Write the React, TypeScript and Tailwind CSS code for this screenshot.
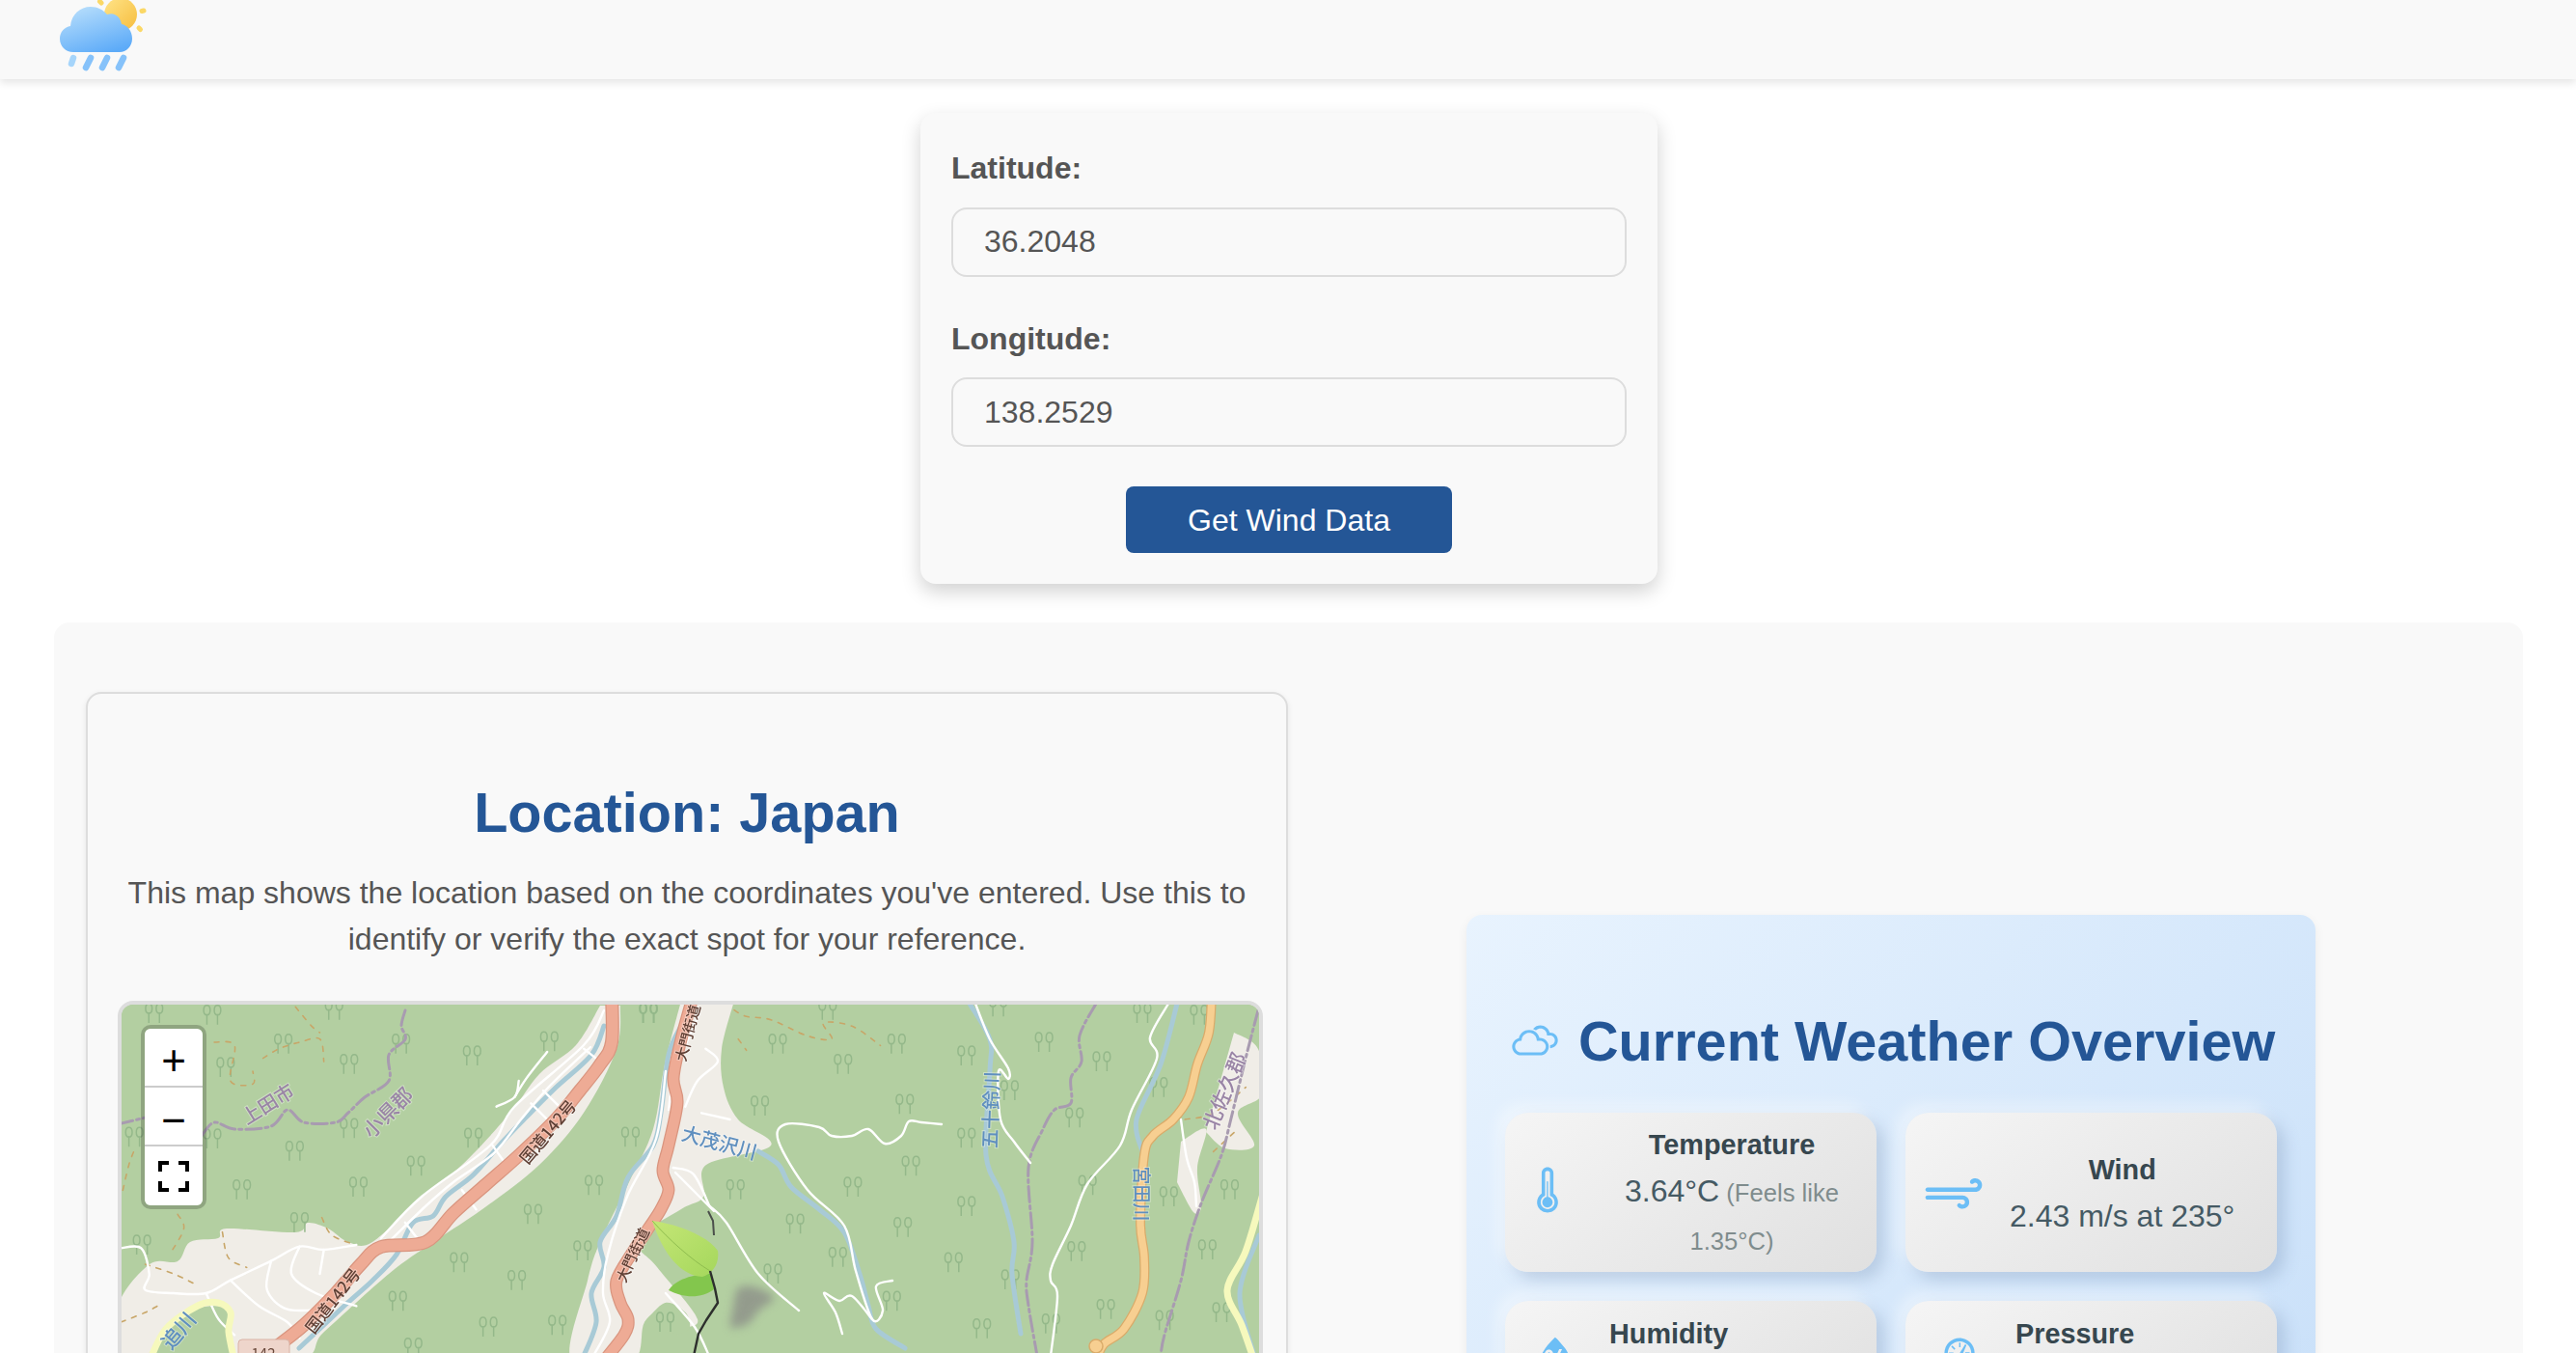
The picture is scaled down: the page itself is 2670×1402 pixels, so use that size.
import React from 'react';
import { WiBarometer, WiCloudy, WiHumidity, WiStrongWind, WiThermometer } from 'react-icons/wi';

type Pts = number[][];

// the crops of the map were read in zoomed coordinates, these bring them back to page pixels
const z3 = (pts: Pts): Pts => pts.map(([x, y]) => [100 + x / 2.376, 1020 + y / 3]);
const z4 = (pts: Pts): Pts => pts.map(([x, y]) => [660 + x / 2.376, 1020 + y / 3]);

const smooth = (p: Pts) => {
    let d = `M${p[0][0]} ${p[0][1]}`;
    for (let i = 0; i < p.length - 1; i++) {
        const a = p[Math.max(i - 1, 0)];
        const b = p[i];
        const c = p[i + 1];
        const e = p[Math.min(i + 2, p.length - 1)];
        d += ` C${b[0] + (c[0] - a[0]) / 6} ${b[1] + (c[1] - a[1]) / 6} ${c[0] - (e[0] - b[0]) / 6} ${c[1] - (e[1] - b[1]) / 6} ${c[0]} ${c[1]}`;
    }
    return d;
};
const shape = (p: Pts) => smooth(p) + ' Z';

const trees: Pts = [
    ...z3([[142, 90], [285, 95], [585, 80], [460, 185], [318, 258], [622, 248], [925, 222], [1115, 178], [750, 185], [488, 518], [787, 565], [358, 638], [645, 630], [112, 810], [500, 740], [928, 478], [1225, 625], [1075, 715], [893, 865], [1197, 828], [1035, 920], [742, 985], [965, 1065], [1135, 1060], [1315, 475], [1360, 90], [622, 448], [93, 475], [285, 480], [780, 1130]]),
    ...z4([[28, 90], [470, 80], [890, 70], [1245, 90], [1385, 95], [347, 185], [640, 185], [1003, 180], [812, 222], [508, 248], [1145, 240], [303, 378], [660, 373], [1078, 415], [812, 478], [675, 565], [243, 638], [532, 630], [812, 690], [390, 745], [655, 755], [495, 848], [780, 865], [1083, 830], [1405, 825], [920, 918], [335, 900], [628, 985], [1155, 1010], [1440, 1020], [850, 1070], [1020, 1055], [1310, 660], [1460, 638], [1285, 320], [918, 330], [70, 1050], [1110, 625], [1300, 1045]]),
];

const land: Pts[] = [
    [[622, 1042], [597, 1083], [559, 1113], [529, 1153], [479, 1207], [437, 1240], [386, 1287], [361, 1287], [340, 1273], [319, 1267], [306, 1277], [235, 1273], [226, 1283], [197, 1287], [184, 1307], [155, 1310], [122, 1353], [122, 1410], [302, 1410], [336, 1380], [403, 1320], [449, 1287], [500, 1253], [559, 1207], [605, 1153], [639, 1087], [643, 1042]],
    [[706, 1037], [689, 1103], [677, 1170], [651, 1227], [622, 1287], [609, 1327], [592, 1410], [656, 1410], [668, 1370], [690, 1355], [700, 1373], [723, 1367], [681, 1313], [660, 1285], [706, 1253], [729, 1240], [732, 1207], [799, 1187], [765, 1160], [750, 1127], [748, 1087], [761, 1037]],
    [[1279, 1070], [1304, 1087], [1309, 1133], [1283, 1153], [1300, 1187], [1270, 1190], [1250, 1173]],
    [[1224, 1183], [1250, 1170], [1241, 1210], [1245, 1250], [1237, 1256], [1220, 1225]],
];

const rivers: Pts[] = [
    [[626, 1063], [613, 1093], [576, 1127], [546, 1157], [521, 1183], [491, 1217], [462, 1240], [449, 1260], [428, 1267], [411, 1300], [386, 1327], [357, 1353], [310, 1397]],
    [[706, 1063], [693, 1093], [685, 1153], [677, 1187], [651, 1220], [639, 1260], [622, 1287], [626, 1313], [613, 1340], [618, 1370], [605, 1405]],
    [[786, 1193], [807, 1207], [820, 1230], [849, 1253], [875, 1277], [891, 1320], [900, 1353], [908, 1377], [938, 1397]],
    [[1005, 1040], [1026, 1077], [1026, 1110], [1022, 1197], [1039, 1240], [1051, 1287], [1049, 1320], [1058, 1382]],
    [[1220, 1040], [1203, 1103], [1178, 1160], [1184, 1193]],
    [[1305, 1280], [1285, 1340], [1300, 1405]],
];

const boundaries: Pts[] = [
    [[420, 1047], [416, 1063], [420, 1077], [403, 1093], [403, 1120], [378, 1137], [361, 1153], [348, 1163], [315, 1163], [298, 1150], [281, 1167], [243, 1170], [222, 1163], [209, 1177]],
    [[122, 1165], [155, 1157]],
    [[1136, 1040], [1119, 1073], [1121, 1100], [1110, 1117], [1110, 1143], [1093, 1150], [1081, 1170], [1066, 1210], [1070, 1287], [1064, 1327], [1066, 1353], [1075, 1405]],
    [[1304, 1047], [1291, 1097], [1275, 1163], [1266, 1197], [1245, 1247], [1232, 1287], [1224, 1327], [1207, 1383], [1203, 1405]],
];

const tracks: Pts[] = [
    [[976, 1165], [955, 1163], [942, 1162], [934, 1177], [917, 1185], [900, 1170], [883, 1177], [862, 1177], [849, 1168], [814, 1165], [807, 1183], [837, 1233], [875, 1270], [887, 1317], [904, 1367], [915, 1358], [908, 1333], [925, 1327]],
    [[904, 1367], [883, 1343], [870, 1348], [854, 1340], [866, 1360], [873, 1382]],
    [[1011, 1040], [1026, 1077], [1045, 1107], [1045, 1118], [1035, 1110], [1037, 1160], [1051, 1183], [1068, 1205]],
    [[1211, 1040], [1192, 1075], [1199, 1097], [1173, 1150], [1161, 1187], [1127, 1227], [1110, 1270], [1091, 1310], [1089, 1327], [1096, 1343], [1089, 1405]],
    [[736, 1250], [753, 1267], [786, 1320], [828, 1358]],
    [[626, 1047], [605, 1083], [533, 1147], [508, 1187], [437, 1240], [395, 1283]],
    [[612, 1085], [570, 1125], [540, 1160], [512, 1195], [470, 1225], [441, 1250], [400, 1290]],
    [[690, 1110], [680, 1180], [650, 1240], [630, 1300], [625, 1340], [632, 1370], [615, 1405]],
    [[725, 1050], [700, 1110], [693, 1150]],
    [[700, 1215], [725, 1240], [740, 1255]],
    [[690, 1340], [720, 1375], [735, 1405]],
    [[1224, 1160], [1230, 1200], [1238, 1225], [1240, 1250]],
    ...[
        [[60, 820], [110, 820], [130, 900], [120, 950], [190, 960], [270, 960], [330, 920], [430, 860], [500, 815], [560, 825], [640, 810]],
        [[330, 920], [400, 1000], [470, 1050], [500, 1100]],
        [[430, 860], [420, 950], [470, 1010], [560, 1010]],
        [[500, 815], [480, 900], [540, 960], [640, 1000]],
        [[270, 960], [300, 1040], [340, 1090]],
        [[560, 825], [550, 900]],
        [[1100, 330], [1140, 380]],
        [[1070, 370], [1110, 420]],
        [[975, 500], [1000, 545]],
        [[1200, 200], [1230, 230]],
        [[1110, 210], [1060, 290], [1030, 350]],
        [[1040, 300], [1030, 350], [985, 380]],
        [[900, 640], [935, 700]],
        [[760, 740], [790, 790]],
        [[1500, 200], [1530, 240], [1480, 300], [1450, 380]],
        [[1490, 400], [1560, 420]],
        [[1420, 570], [1470, 590], [1510, 690]],
    ].map(z3),
];

const paths: Pts[] = [
    ...[
        [[290, 180], [340, 190], [330, 300], [385, 310], [385, 270]],
        [[410, 230], [450, 200], [500, 180], [550, 170], [560, 240]],
        [[490, 70], [530, 130], [550, 150]],
        [[65, 640], [80, 560], [95, 510]],
        [[200, 715], [215, 760], [180, 840]],
        [[555, 725], [580, 780], [640, 810]],
        [[310, 770], [325, 850], [370, 880]],
        [[120, 870], [190, 900], [240, 930]],
        [[60, 1050], [120, 1020], [150, 1000]],
    ].map(z3),
    ...[
        [[240, 80], [270, 100], [330, 110], [420, 160], [480, 170], [460, 120], [530, 130], [600, 190]],
        [[250, 170], [270, 205]],
        [[1350, 420], [1420, 400], [1500, 320]],
        [[1420, 520], [1480, 450]],
    ].map(z4),
];

const Line = ({ pts, color, width, dash }: { pts: Pts; color: string; width: number; dash?: string }) => (
    <path d={smooth(pts)} fill="none" stroke={color} strokeWidth={width} strokeLinecap="round" strokeLinejoin="round" strokeDasharray={dash} />
);

const roadA: Pts = [[634, 1030], [634, 1080], [622, 1103], [601, 1130], [576, 1160], [538, 1197], [504, 1227], [470, 1257], [441, 1287], [395, 1292], [374, 1310], [348, 1340], [315, 1373], [285, 1397], [270, 1410]];
const roadB: Pts = [[719, 1030], [706, 1077], [698, 1117], [702, 1143], [693, 1187], [687, 1213], [693, 1233], [685, 1253], [672, 1273], [656, 1297], [639, 1327], [643, 1350], [651, 1367], [647, 1383], [626, 1410]];
const roadC: Pts = [[1256, 1030], [1253, 1070], [1241, 1103], [1232, 1137], [1216, 1160], [1195, 1177], [1186, 1197], [1182, 1267], [1186, 1303], [1184, 1340], [1165, 1377], [1144, 1393], [1136, 1410]];

const labels = [
    { t: '上田市', x: 277, y: 1143, r: -32, s: 20, c: '#9a85a6' },
    { t: '小県郡', x: 401, y: 1152, r: -45, s: 21, c: '#9a85a6' },
    { t: '国道142号', x: 567, y: 1172, r: -50, s: 17, c: '#5f4035' },
    { t: '国道142号', x: 344, y: 1347, r: -52, s: 17, c: '#5f4035' },
    { t: '大門街道', x: 712, y: 1070, r: -75, s: 15, c: '#5f4035' },
    { t: '大門街道', x: 655, y: 1300, r: -65, s: 15, c: '#5f4035' },
    { t: '大茂沢川', x: 746, y: 1183, r: 15, s: 20, c: '#5f8fbf' },
    { t: '五十鈴川', x: 1026, y: 1150, r: -88, s: 20, c: '#5f8fbf' },
    { t: '追川', x: 184, y: 1378, r: -50, s: 21, c: '#5f8fbf' },
    { t: '北佐久郡', x: 1268, y: 1130, r: -68, s: 21, c: '#9a85a6' },
    { t: '宮田川', x: 1184, y: 1237, r: 90, s: 19, c: '#5f8fbf' },
];

const MapDrawing = () => (
    <svg className="block w-full h-full" viewBox="126 1041 1179 792">
        <defs>
            <filter id="soft" x="-2%" y="-2%" width="104%" height="104%">
                <feGaussianBlur stdDeviation="0.55" />
            </filter>
            <filter id="smudge" x="-30%" y="-30%" width="160%" height="160%">
                <feGaussianBlur stdDeviation="5" />
            </filter>
            <linearGradient id="leaf" x1="0" y1="0" x2="1" y2="1">
                <stop offset="0" stopColor="#c4e676" />
                <stop offset="1" stopColor="#a5d75c" />
            </linearGradient>
            <g id="tree" fill="none" stroke="#94b88a" strokeWidth="1.5">
                <path d="M-5.5 10V-1M-5.5 0C-10 0 -10 -10 -5.5 -10C-1 -10 -1 0 -5.5 0Z" />
                <path d="M5.5 10V-1M5.5 0C1 0 1 -10 5.5 -10C10 -10 10 0 5.5 0Z" />
            </g>
        </defs>
        <rect x="100" y="1020" width="1240" height="820" fill="#b3cfa1" />
        <g filter="url(#soft)">
            {land.map((p, i) => (
                <path key={i} d={shape(p)} fill="#f0ede7" />
            ))}
            <path d={shape(z3([[330, 1146], [330, 1020], [290, 1000], [220, 1020], [160, 1100], [130, 1146]]))} fill="#b3cfa1" />
            <path d={shape(z4([[20, 1050], [70, 990], [120, 1020], [130, 1070], [100, 1090]]))} fill="#b3cfa1" />
            {trees.map(([x, y], i) => (
                <use key={i} href="#tree" x={x} y={y} />
            ))}
            {paths.map((p, i) => (
                <Line key={i} pts={p} color="#c8a668" width={1.6} dash="5 7" />
            ))}
            {boundaries.map((p, i) => (
                <Line key={i} pts={p} color="#a89bb0" width={3} dash="16 4 3 4" />
            ))}
            {rivers.map((p, i) => (
                <Line key={i} pts={p} color="#a8cad6" width={5} />
            ))}
            {tracks.map((p, i) => (
                <Line key={i} pts={p} color="#ffffff" width={2.4} />
            ))}
            <Line pts={[[155, 1410], [172, 1377], [205, 1353], [226, 1350], [239, 1360], [237, 1380], [243, 1410]]} color="#f6f9bd" width={7} />
            <Line pts={[[1309, 1237], [1291, 1297], [1272, 1337], [1287, 1373], [1300, 1410]]} color="#f6f9bd" width={7} />
            <Line pts={roadC} color="#d9ab6a" width={10} />
            <Line pts={roadC} color="#f7cf91" width={7.5} />
            <circle cx="1136" cy="1395" r="7" fill="#f7cf91" stroke="#d9ab6a" strokeWidth="1.5" />
            <Line pts={roadA} color="#d9957f" width={14} />
            <Line pts={roadA} color="#eeab95" width={11.5} />
            <Line pts={roadB} color="#d9957f" width={13} />
            <Line pts={roadB} color="#eeab95" width={10.5} />
            <rect x="247" y="1388" width="53" height="24" rx="4" fill="#eed5cb" stroke="#d9b3a5" />
            {labels.map((l, i) => (
                <text
                    key={i}
                    x={l.x}
                    y={l.y}
                    fill={l.c}
                    fontSize={l.s}
                    fontWeight="500"
                    textAnchor="middle"
                    dominantBaseline="central"
                    transform={`rotate(${l.r} ${l.x} ${l.y})`}
                    fontFamily="'Noto Sans CJK JP', sans-serif"
                    stroke="#ffffff"
                    strokeOpacity="0.35"
                    strokeWidth="2"
                    paintOrder="stroke"
                >
                    {l.t}
                </text>
            ))}
            <text x="273" y="1408" fill="#6b4a3c" fontSize="15" textAnchor="middle" fontFamily="'Noto Sans CJK JP', sans-serif">142</text>
        </g>
        {/* the marker plant on top of the tiles */}
        <path d="M757 1370C762 1350 760 1336 768 1333C782 1330 800 1340 803 1346C796 1352 786 1356 782 1364C778 1372 770 1376 757 1376Z" fill="#8c8f88" opacity="0.8" filter="url(#smudge)" />
        <path d="M693 1337C700 1326 718 1320 738 1320L740 1336C726 1347 706 1344 693 1337Z" fill="#83c64d" />
        <path d="M676 1265C700 1268 733 1280 744 1296C746 1310 738 1320 728 1323C704 1322 686 1296 676 1265Z" fill="url(#leaf)" />
        <path d="M676 1265C694 1285 716 1305 736 1317" fill="none" stroke="#8fbd4f" strokeWidth="1" />
        <path d="M734 1255L739 1265L740 1280" fill="none" stroke="#4b4f4b" strokeWidth="2" />
        <path d="M736 1317L741 1335L744 1350L732 1368L724 1382L719 1405" fill="none" stroke="#2d2f2d" strokeWidth="2.4" strokeLinejoin="round" />
    </svg>
);

const LogoMark = () => (
    <svg className="block w-[100px] h-[82px] shrink-0" viewBox="56 0 100 82">
        <defs>
            <linearGradient id="sun" x1="0" y1="0" x2="1" y2="1">
                <stop offset="0" stopColor="#ffe488" />
                <stop offset="1" stopColor="#f6bd3e" />
            </linearGradient>
            <linearGradient id="cloud" x1="0.2" y1="0" x2="0.7" y2="1">
                <stop offset="0" stopColor="#b7defc" />
                <stop offset="1" stopColor="#5dabf8" />
            </linearGradient>
        </defs>
        <circle cx="125" cy="15" r="17" fill="url(#sun)" />
        <g stroke="#fbd866" strokeWidth="5" strokeLinecap="round">
            <path d="M103.5 1.5L105 3" />
            <path d="M147 11.5L149 11" />
            <path d="M144 29L145.5 30.5" />
        </g>
        <path d="M76 54C68 54 62 48 62 40C62 33 67 28 73 27C74 15 83 7 94 7C101 7 107 10 111 15C119 12 125 18 126 25C132 26 137 32 137 40C137 48 131 54 124 54Z" fill="url(#cloud)" />
        <g strokeWidth="6.5" strokeLinecap="round">
            <path d="M76 60L74 66" stroke="#a6d5fb" />
            <path d="M94 60L89 70" stroke="#86c2fa" />
            <path d="M111 60L106 70" stroke="#86c2fa" />
            <path d="M128 60L123 70" stroke="#86c2fa" />
        </g>
    </svg>
);

const FullscreenGlyph = () => (
    <svg className="w-[32px] h-[32px]" viewBox="0 0 32 32" fill="none" stroke="#000" strokeWidth="4">
        <path d="M2 11V2H11M21 2H30V11M30 21V30H21M11 30H2V21" />
    </svg>
);

const stats = [
    { title: 'Temperature', Icon: WiThermometer, size: 64, height: 'h-[165px]', slot: 'w-[64px] ml-[-4px] mr-[42px]', block: 'w-[234px]', value: '3.64°C', note: '(Feels like 1.35°C)' },
    { title: 'Wind', Icon: WiStrongWind, size: 74, height: 'h-[165px]', slot: 'w-[74px] ml-[-3px] mr-[21px]', block: '', value: '2.43 m/s at 235°' },
    { title: 'Humidity', Icon: WiHumidity, size: 64, height: 'h-[116px]', slot: 'w-[64px] ml-[4px] mr-[24px]', block: '', value: '' },
    { title: 'Pressure', Icon: WiBarometer, size: 64, height: 'h-[116px]', slot: 'w-[64px] ml-[8px] mr-[26px]', block: '', value: '' },
];

const StatCard = ({ item }: { item: (typeof stats)[number] }) => (
    <div className={`${item.height} rounded-[24px] flex items-center bg-[linear-gradient(145deg,#f5f5f5,#e0e0e0)] shadow-[8px_8px_16px_rgba(90,120,160,0.25),-8px_-8px_16px_rgba(255,255,255,0.45)] px-[16px]`}>
        <div className={`${item.slot} shrink-0 flex items-center justify-center text-[#6cbef6]`}>
            <item.Icon size={item.size} className="shrink-0" />
        </div>
        <div className={`${item.block} text-center`}>
            <h3 className="text-[28.8px] leading-[48px] font-bold text-[#37474f]">{item.title}</h3>
            <p className="min-h-[48px] text-[32px] leading-[48px] text-[#455a64]">
                {item.value}
                {item.note && <span className="text-[25.6px] text-[#7f8c8d]"> {item.note}</span>}
            </p>
        </div>
    </div>
);

const App = () => {
    return (
        <div className="h-screen overflow-hidden bg-white [font-family:'Liberation_Sans',Arial,sans-serif]">
            <nav className="h-[82px] bg-[#f9f9f9] shadow-[0_4px_8px_rgba(0,0,0,0.1)] pl-[56px] flex items-center">
                <LogoMark />
            </nav>

            <form className="w-[764px] h-[488px] ml-[954px] mt-[35px] bg-[#f9f9f9] rounded-[16px] shadow-[0_8px_20px_rgba(0,0,0,0.18)] px-[32px] pt-[39px]">
                <label className="block text-[32px] leading-[37px] font-bold text-[#555] mb-[22px]">Latitude:</label>
                <input
                    readOnly
                    value="36.2048"
                    className="block w-full h-[72px] rounded-[16px] border-2 border-[#ddd] bg-[#f9f9f9] px-[32px] pb-[2px] text-[32px] text-[#555] outline-none mb-[46px]"
                />
                <label className="block text-[32px] leading-[37px] font-bold text-[#555] mb-[21px]">Longitude:</label>
                <input
                    readOnly
                    value="138.2529"
                    className="block w-full h-[72px] rounded-[16px] border-2 border-[#ddd] bg-[#f9f9f9] px-[32px] text-[32px] text-[#555] outline-none mb-[41px]"
                />
                <button type="button" className="block mx-auto w-[338px] h-[69px] rounded-[8px] bg-[#245696] text-white text-[32px]">
                    Get Wind Data
                </button>
            </form>

            <main className="ml-[56px] mr-[55px] mt-[40px] h-[900px] bg-[#f9f9f9] rounded-[16px] pl-[33px] pt-[72px] flex items-start">
                <section className="w-[1246px] shrink-0 rounded-[16px] border-2 border-[#ddd] bg-[#f9f9f9] shadow-[0_2px_6px_rgba(0,0,0,0.08)] pt-[90px] pl-[31px] pr-[24px] pb-[32px]">
                    <h2 className="text-center text-[57.6px] leading-[66px] font-bold text-[#245696] pr-[7px] mb-[26px]">Location: Japan</h2>
                    <p className="text-center text-[32px] leading-[48px] text-[#555] pr-[7px] mb-[40px]">
                        This map shows the location based on the coordinates you've entered. Use this to identify or verify the exact spot for your reference.
                    </p>
                    <div className="relative h-[800px] border-4 border-[#ddd] rounded-[16px] overflow-hidden bg-[#b3cfa1]">
                        <MapDrawing />
                        <div className="absolute left-[20px] top-[21px] w-[68px] rounded-[10px] border-4 border-[rgba(0,0,0,0.2)] bg-clip-padding">
                            <div className="h-[61px] rounded-t-[6px] bg-white border-b-2 border-[#ccc] flex items-center justify-center text-[44px] leading-none text-black pt-[6px]">+</div>
                            <div className="h-[61px] bg-white border-b-2 border-[#ccc] flex items-center justify-center text-[44px] leading-none text-black pt-[8px]">−</div>
                            <div className="h-[61px] rounded-b-[6px] bg-white flex items-center justify-center">
                                <FullscreenGlyph />
                            </div>
                        </div>
                    </div>
                </section>

                <section className="w-[880px] shrink-0 ml-[185px] mt-[231px] rounded-[16px] bg-[linear-gradient(135deg,#e8f3fe,#c9e0f9)] shadow-[0_4px_12px_rgba(0,0,0,0.06)] px-[40px] pt-[99px] pb-[40px]">
                    <div className="flex items-center h-[64px] mb-[42px]">
                        <WiCloudy size={64} className="shrink-0 text-[#6cbef6] ml-[-1px] mr-[13px]" />
                        <h2 className="text-[57.6px] leading-[64px] font-bold text-[#245696] whitespace-nowrap">Current Weather Overview</h2>
                    </div>
                    <div className="grid grid-cols-2 gap-[30px]">
                        {stats.map((item) => (
                            <StatCard key={item.title} item={item} />
                        ))}
                    </div>
                </section>
            </main>
        </div>
    );
};

export default App;
